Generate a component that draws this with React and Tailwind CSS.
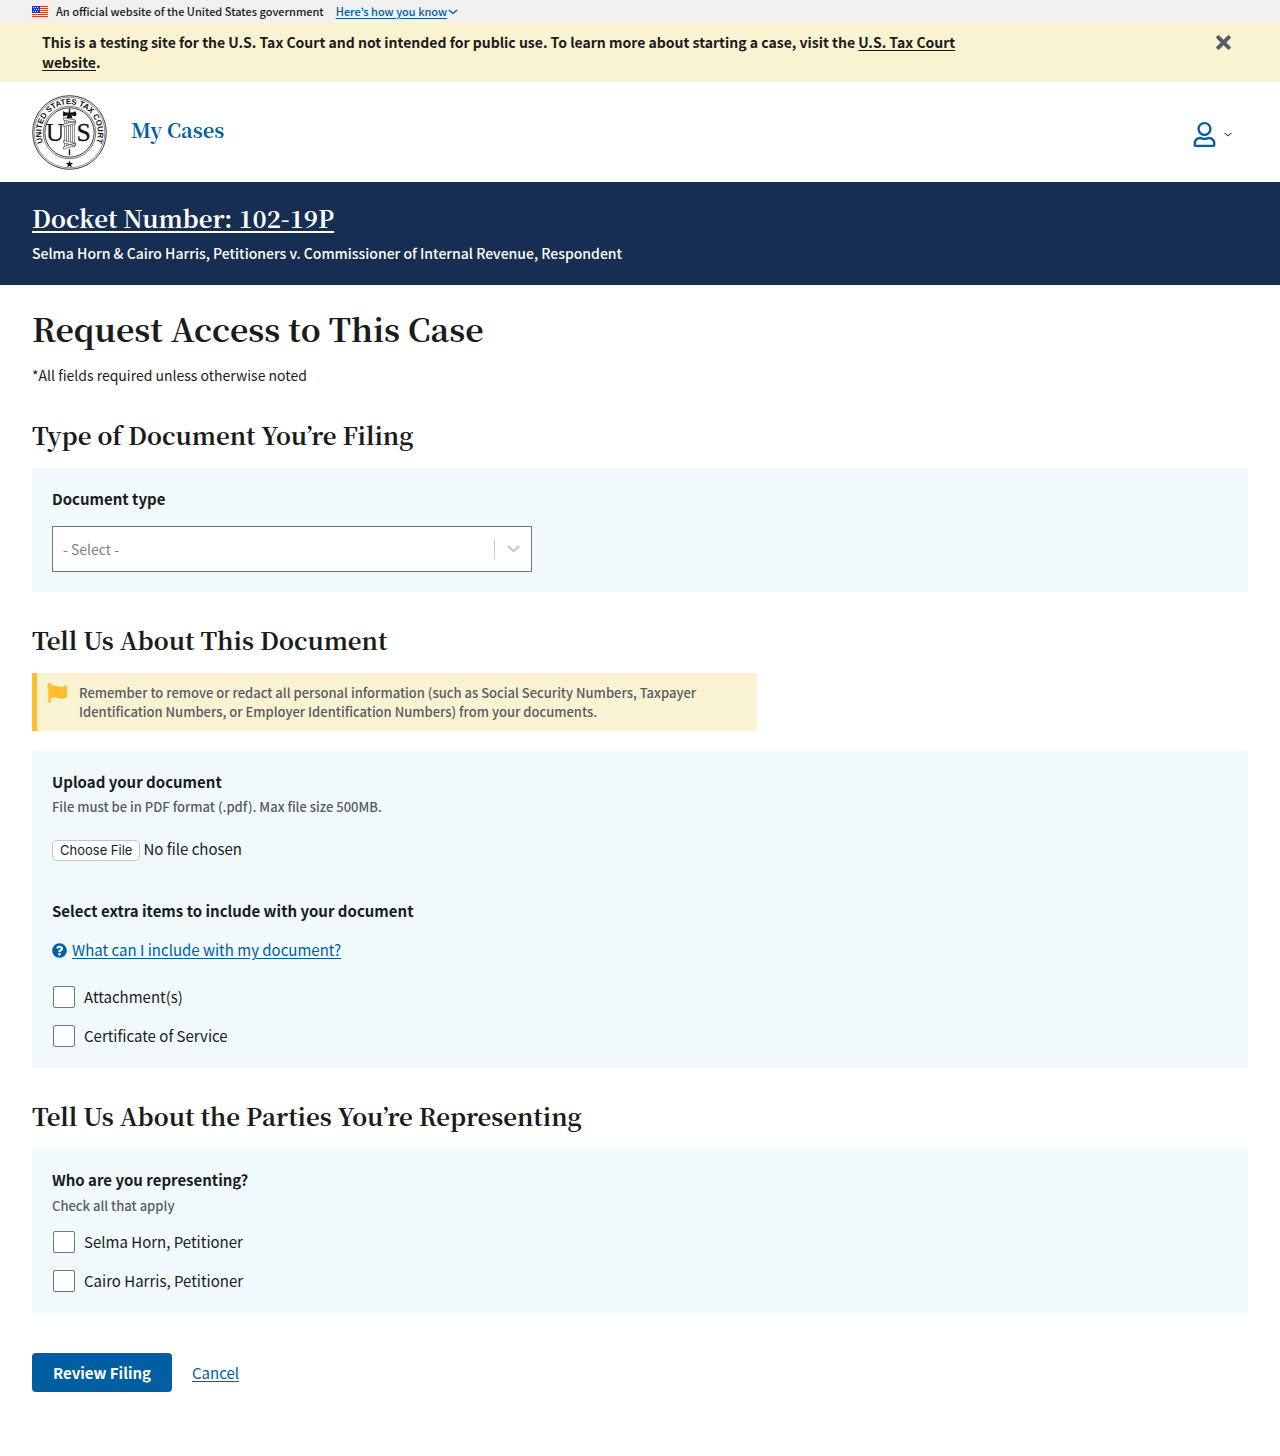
import { FaRegUser, FaTimes, FaFlag, FaQuestionCircle } from "react-icons/fa";

function UsFlag() {
  return (
    <svg viewBox="0 0 16 11" className="h-[11px] w-4 shrink-0" shapeRendering="crispEdges" aria-hidden="true">
      <rect width="16" height="11" fill="#fff" />
      {[0, 2, 4, 6, 8, 10].map((y) => (
        <rect key={y} y={y} width="16" height="1" fill="#db3e1f" />
      ))}
      <rect width="8" height="7" fill="#1e33b1" />
      {[1, 3, 5].map((y) =>
        [1, 3, 5].map((x) => <rect key={`${x}-${y}`} x={y === 3 ? x + 1 : x} y={y} width="1" height="1" fill="#fff" />)
      )}
    </svg>
  );
}

function Chevron({ className, strokeWidth = 1.3 }) {
  return (
    <svg viewBox="0 0 10 6" className={className} fill="none" stroke="currentColor" strokeWidth={strokeWidth} strokeLinecap="round" strokeLinejoin="round" aria-hidden="true">
      <path d="M1.2 1.2 5 4.6 8.8 1.2" />
    </svg>
  );
}

function Seal() {
  return (
    <svg viewBox="0 0 76 76" className="size-[75px] shrink-0" role="img" aria-label="United States Tax Court seal">
      <g fill="none" stroke="#222">
        <circle cx="38" cy="38" r="37.3" strokeWidth="0.9" />
        <circle cx="38" cy="38" r="35.8" strokeWidth="0.5" />
        <circle cx="38" cy="38" r="26.6" strokeWidth="0.6" />
        <circle cx="38" cy="38" r="25" strokeWidth="0.9" />
      </g>
      <path id="seal-arc" d="M12 50.2A28.7 28.7 0 1 1 64 50.2" fill="none" />
      <text fontSize="8" className="font-['Liberation_Sans',sans-serif] font-bold" fill="#111">
        <textPath href="#seal-arc" startOffset="50%" textAnchor="middle">UNITED STATES TAX COURT</textPath>
      </text>
      <g className="font-['Liberation_Serif',serif]" fontSize="26" fill="#111">
        <text x="14" y="47">U</text>
        <text x="45" y="47" stroke="#111" strokeWidth="0.3">S</text>
      </g>
      <rect x="32.4" y="23" width="11" height="31" fill="#fff" />
      <g stroke="#555" strokeWidth="0.7">
        <path d="M33 24v29M35 24v29M37 24v29M39 24v29M41 24v29M43 24v29" />
      </g>
      <g fill="#fff" stroke="#333" strokeWidth="0.6">
        <path d="M32 23l12 2.5V28l-12-2.5zM32 29.5l12-3V29l-12 3zM32 46l12 3v2.5L32 48.5zM32 52.5l12-4V51l-12 4z" />
      </g>
      <path d="M37.3 14h1.4v6h-1.4zM37.3 55h1.4v6h-1.4z" fill="#111" />
      <path d="M31.5 16.5c2 1.2 4 1.5 6.5 1.2 2 .3 4 0 6-1.2l1.2 2.7-1.2 2.6c-2-1-4-1.3-6-1-2.5-.3-4.5 0-6.5 1z" fill="#111" />
      <path d="M36.5 19.5h3l1.5 4h-6z" fill="#111" />
      <path d="M38 66.3l1 2.5 2.700.2-2.100 1.700.7 2.600L38 71.900l-2.300 1.400.7-2.600-2.100-1.700 2.700-.2z" fill="#111" />
    </svg>
  );
}

function SectionTitle({ children }) {
  return <h2 className="pb-px font-['Noto_Serif_CJK_KR','Liberation_Serif',serif] text-2xl font-bold leading-8">{children}</h2>;
}

function Panel({ className = "", children }) {
  return <div className={`bg-[#f0f9fc] p-5 ${className}`}>{children}</div>;
}

function CheckItem({ id, children }) {
  return (
    <div className="flex items-center gap-[9px] pl-px">
      <input id={id} type="checkbox" className="size-[22px] appearance-none rounded-[2px] border border-[#71767a] bg-white checked:bg-[#005ea2]" />
      <label htmlFor={id} className="leading-6">{children}</label>
    </div>
  );
}

export default function App() {
  return (
    <div className="bg-white pb-16 font-['Noto_Sans_CJK_KR','Open_Sans',sans-serif] text-[15px] leading-[22px] text-[#1b1b1b]">
      <div className="flex h-[22px] items-center bg-[#f0f0f0] px-8 text-[11px] font-medium">
        <UsFlag />
        <span className="ml-2">An official website of the United States government</span>
        <button type="button" className="ml-3 flex items-center gap-px text-[#005ea2]">
          <span className="underline underline-offset-2">Here’s how you know</span>
          <Chevron className="mt-0.5 h-[6px] w-[10px]" />
        </button>
      </div>

      <div className="flex items-start justify-between bg-[#faf3d1] py-[10px] pr-[46px] pl-[42px]">
        <p className="max-w-[960px] text-sm font-bold leading-5">
          This is a testing site for the U.S. Tax Court and not intended for public use. To learn more about starting a case, visit the{" "}
          <a href="#website" className="underline underline-offset-2">U.S. Tax Court website</a>.
        </p>
        <button type="button" aria-label="Close" className="text-[#565c65]">
          <FaTimes size={21} />
        </button>
      </div>

      <header className="flex h-[100px] items-center justify-between px-8">
        <div className="flex items-center gap-6">
          <Seal />
          <a href="#cases" className="pb-1 font-['Noto_Serif_CJK_KR','Liberation_Serif',serif] text-xl font-bold text-[#005ea2]">My Cases</a>
        </div>
        <button type="button" aria-label="My account" className="mr-4 flex items-center gap-[7px] pt-1 text-[#005ea2]">
          <FaRegUser size={25} />
          <Chevron className="h-[5px] w-2 text-[#3d4551]" />
        </button>
      </header>

      <div className="bg-[#162e51] px-8 py-5 text-white">
        <p className="font-['Noto_Serif_CJK_KR','Liberation_Serif',serif] text-2xl font-bold leading-8">
          <a href="#docket" className="underline underline-offset-3">Docket Number: 102-19P</a>
        </p>
        <p className="mt-2 text-sm font-medium leading-[23px]">
          Selma Horn &amp; Cairo Harris, Petitioners v. Commissioner of Internal Revenue, Respondent
        </p>
      </div>

      <main className="px-8">
        <h1 className="pt-[22px] font-['Noto_Serif_CJK_KR','Liberation_Serif',serif] text-[32px] font-bold leading-[42px]">Request Access to This Case</h1>
        <p className="mt-[14px] text-sm leading-6">*All fields required unless otherwise noted</p>

        <form onSubmit={(e) => e.preventDefault()}>
          <section className="mt-8">
            <SectionTitle>Type of Document You’re Filing</SectionTitle>
            <Panel className="mt-4">
              <label htmlFor="document-type" className="block font-bold">Document type</label>
              <div className="relative mt-4 w-[480px] max-w-full">
                <select id="document-type" className="block h-[46px] w-full appearance-none border border-[#71767a] bg-white px-[10px] text-sm text-[#808080]">
                  <option>- Select -</option>
                </select>
                <div className="pointer-events-none absolute inset-y-0 right-[12px] flex items-center gap-3 text-[#cccccc]">
                  <span className="h-5 w-px bg-[#cccccc]" />
                  <Chevron className="h-[8px] w-[13px]" strokeWidth={1.9} />
                </div>
              </div>
            </Panel>
          </section>

          <section className="mt-8">
            <SectionTitle>Tell Us About This Document</SectionTitle>
            <div className="mt-4 flex w-[725px] max-w-full gap-3 border-l-[5px] border-[#ffbe2e] bg-[#faf3d1] py-[10px] pl-[10px] pr-12">
              <FaFlag size={20} className="shrink-0 text-[#ffbe2e]" />
              <p className="text-[13px] font-medium leading-[19px] text-[#565c65]">
                Remember to remove or redact all personal information (such as Social Security Numbers, Taxpayer Identification Numbers, or Employer Identification Numbers) from your documents.
              </p>
            </div>
            <Panel className="mt-5">
              <label htmlFor="upload" className="block font-bold">Upload your document</label>
              <p className="mt-1 text-[13px] font-medium leading-5 text-[#565c65]">File must be in PDF format (.pdf). Max file size 500MB.</p>
              <input
                id="upload"
                type="file"
                className="mt-5 block h-6 w-full max-w-[480px] text-[15px] file:mr-[3px] file:mt-[3px] file:h-[21px] file:rounded-[5px] file:border file:border-solid file:border-[#c3c6c8] file:bg-white file:px-[7px] file:font-['Inter',sans-serif] file:text-[13px] file:leading-[19px] file:font-normal file:text-[#1b1b1b]"
              />

              <p className="mt-[39px] font-bold">Select extra items to include with your document</p>
              <a href="#help" className="mt-[17px] flex w-fit items-center gap-[5px] text-[#005ea2]">
                <FaQuestionCircle size={15} />
                <span className="underline underline-offset-2">What can I include with my document?</span>
              </a>
              <div className="mt-6 flex flex-col gap-[15px]">
                <CheckItem id="attachments">Attachment(s)</CheckItem>
                <CheckItem id="certificate">Certificate of Service</CheckItem>
              </div>
            </Panel>
          </section>

          <section className="mt-8">
            <SectionTitle>Tell Us About the Parties You’re Representing</SectionTitle>
            <Panel className="mt-4">
              <fieldset>
                <legend className="font-bold">Who are you representing?</legend>
                <p className="mt-[5px] text-[13px] font-medium leading-5 text-[#565c65]">Check all that apply</p>
                <div className="mt-[14px] flex flex-col gap-[15px]">
                  <CheckItem id="selma">Selma Horn, Petitioner</CheckItem>
                  <CheckItem id="cairo">Cairo Harris, Petitioner</CheckItem>
                </div>
              </fieldset>
            </Panel>
          </section>

          <div className="mt-10 flex items-center gap-5">
            <button type="submit" className="h-[39px] min-w-[140px] rounded bg-[#005ea2] px-5 font-bold text-white">Review Filing</button>
            <a href="#cancel" className="text-[#005ea2] underline underline-offset-2">Cancel</a>
          </div>
        </form>
      </main>
    </div>
  );
}
